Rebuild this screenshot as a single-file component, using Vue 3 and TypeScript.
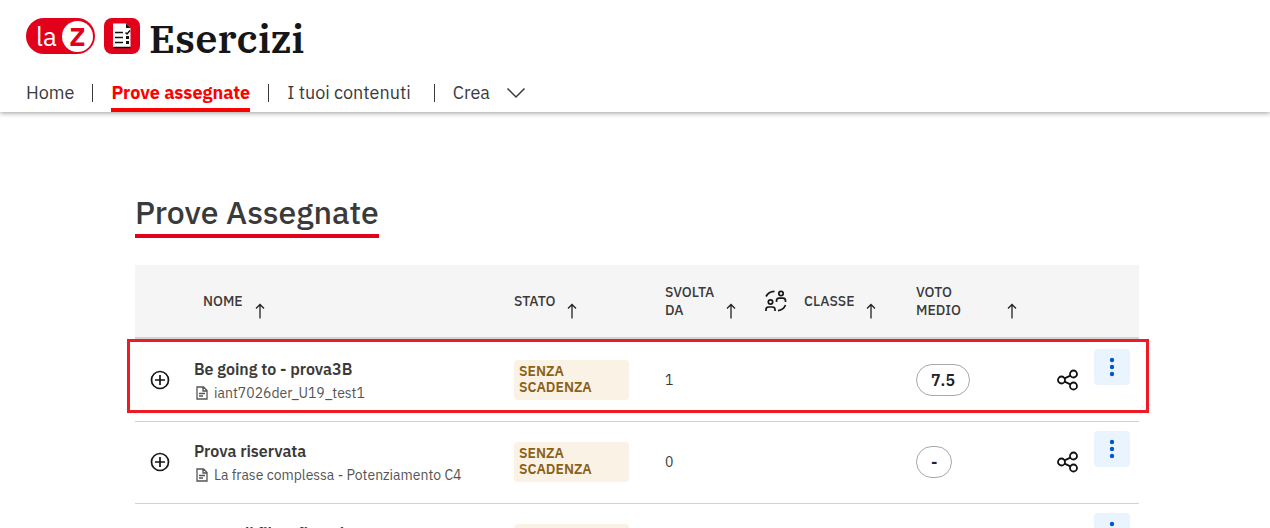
<script setup lang="ts">
interface Prova {
  titolo: string
  contenuto: string
  stato: string
  svolta: number
  voto: string
}

const prove: Prova[] = [
  { titolo: 'Be going to - prova3B', contenuto: 'iant7026der_U19_test1', stato: 'SENZA SCADENZA', svolta: 1, voto: '7.5' },
  { titolo: 'Prova riservata', contenuto: 'La frase complessa - Potenziamento C4', stato: 'SENZA SCADENZA', svolta: 0, voto: '-' },
  { titolo: 'prova di filosofia - al', contenuto: '', stato: 'SENZA SCADENZA', svolta: 0, voto: '-' },
]
</script>

<template>
  <div class="page">
    <header class="topbar">
      <a class="brand" href="#" aria-label="laZ Esercizi">
        <span class="laz"><span class="la">la</span><span class="zeta">Z</span></span>
        <svg class="app-icon" viewBox="0 0 36 36" aria-hidden="true">
          <rect width="36" height="36" rx="8" fill="#e2001a" />
          <path d="M9 5.500H22L26.500 10V29H9Z" fill="#fff" />
          <path d="M22 5.500L26.500 10H22Z" fill="#111" />
          <path d="M9.500 29.500H26.500" stroke="#111" stroke-width="1.500" />
          <path d="M11 14.500H19M11 19.500H19M11 24.500H19" stroke="#111" stroke-width="1.500" />
          <path d="M21.500 14.500L23 16L26 12.500" stroke="#111" stroke-width="1.500" fill="none" />
          <path d="M22 18H25V21H22ZM22 23H25V26H22Z" fill="#111" />
        </svg>
        <span class="brand-name">Esercizi</span>
      </a>
      <nav class="nav">
        <a href="#">Home</a>
        <span class="sep"></span>
        <a href="#" class="active">Prove assegnate</a>
        <span class="sep"></span>
        <a href="#">I tuoi contenuti</a>
        <span class="sep wide"></span>
        <button type="button" class="crea">
          Crea
          <svg width="20" height="12" viewBox="0 0 20 12" aria-hidden="true">
            <path d="M1.500 1.500L10 10L18.500 1.500" fill="none" stroke="#3a3a3a" stroke-width="1.500" />
          </svg>
        </button>
      </nav>
    </header>

    <main class="content">
      <h1>Prove Assegnate</h1>
      <div class="table-wrap">
        <table>
          <colgroup>
            <col class="c-expand" /><col /><col class="c-stato" /><col class="c-svolta" />
            <col class="c-classe" /><col class="c-voto" /><col class="c-share" /><col class="c-menu" />
          </colgroup>
          <thead>
            <tr>
              <th></th>
              <th>
                <div class="head nome"><span>NOME</span>
                  <svg class="arrow" viewBox="0 0 10 16"><path d="M5 15.500V1.500M1 5.500L5 1.500L9 5.500" /></svg>
                </div>
              </th>
              <th>
                <div class="head"><span>STATO</span>
                  <svg class="arrow" viewBox="0 0 10 16"><path d="M5 15.500V1.500M1 5.500L5 1.500L9 5.500" /></svg>
                </div>
              </th>
              <th>
                <div class="head"><span>SVOLTA<br />DA</span>
                  <svg class="arrow" viewBox="0 0 10 16"><path d="M5 15.500V1.500M1 5.500L5 1.500L9 5.500" /></svg>
                </div>
              </th>
              <th>
                <div class="head">
                  <svg class="people" viewBox="0 0 22 22" aria-hidden="true">
                    <g fill="none" stroke="#161616" stroke-width="1.700">
                      <circle cx="5.500" cy="12" r="2.200" />
                      <circle cx="16" cy="3.500" r="2.200" />
                      <path d="M1 21V19.500Q1 17 3.500 17H7.500Q10 17 10 19.500V21" />
                      <path d="M11.500 12V10.700Q11.500 8.200 14 8.200H18Q20.500 8.200 20.500 10.700V12" />
                      <path d="M1 6.500Q3.500 1.500 9.500 1.300" />
                      <path d="M20.500 15Q18.500 20 13 20.700" />
                    </g>
                  </svg>
                  <span>CLASSE</span>
                  <svg class="arrow" viewBox="0 0 10 16"><path d="M5 15.500V1.500M1 5.500L5 1.500L9 5.500" /></svg>
                </div>
              </th>
              <th>
                <div class="head voto-h"><span>VOTO<br />MEDIO</span>
                  <svg class="arrow" viewBox="0 0 10 16"><path d="M5 15.500V1.500M1 5.500L5 1.500L9 5.500" /></svg>
                </div>
              </th>
              <th></th>
              <th></th>
            </tr>
          </thead>
          <tbody>
            <tr v-for="p in prove" :key="p.titolo">
              <td class="icon-cell">
                <button type="button" class="expand" aria-label="Espandi">
                  <svg width="20" height="20" viewBox="0 0 20 20">
                    <circle cx="10" cy="10" r="8.500" fill="none" stroke="#161616" stroke-width="1.700" />
                    <path d="M10 5V15M5 10H15" stroke="#161616" stroke-width="1.700" />
                  </svg>
                </button>
              </td>
              <td>
                <div class="titolo">{{ p.titolo }}</div>
                <div class="contenuto">
                  <svg width="12" height="14" viewBox="0 0 12 14" aria-hidden="true">
                    <path d="M1 1H7.500L11 4.500V13H1ZM7 1V5H11M3 7.500H9M3 10H7" fill="none" stroke="#555" stroke-width="1.300" />
                  </svg>
                  <span>{{ p.contenuto }}</span>
                </div>
              </td>
              <td class="data-cell"><div class="badge">{{ p.stato }}</div></td>
              <td class="data-cell num">{{ p.svolta }}</td>
              <td></td>
              <td class="data-cell"><span class="voto">{{ p.voto }}</span></td>
              <td class="icon-cell">
                <button type="button" aria-label="Condividi">
                  <svg width="22" height="22" viewBox="0 0 22 22">
                    <g fill="none" stroke="#111" stroke-width="1.800">
                      <circle cx="4.500" cy="11" r="3.500" />
                      <circle cx="16.500" cy="5" r="3.500" />
                      <circle cx="16.500" cy="17" r="3.500" />
                      <path d="M7.600 9.400L13.400 6.600M7.600 12.600L13.400 15.400" />
                    </g>
                  </svg>
                </button>
              </td>
              <td class="menu-cell">
                <button type="button" class="menu" aria-label="Altre azioni">
                  <svg width="6" height="20" viewBox="0 0 6 20">
                    <g fill="#0058c8"><circle cx="3" cy="3" r="2.200" /><circle cx="3" cy="10" r="2.200" /><circle cx="3" cy="17" r="2.200" /></g>
                  </svg>
                </button>
              </td>
            </tr>
          </tbody>
        </table>
        <div class="highlight"></div>
      </div>
    </main>
  </div>
</template>

<style>
body { margin: 0; background: #fff; }
</style>

<style scoped>
* { box-sizing: border-box; }
.page {
  height: 100vh;
  overflow: hidden;
  font-family: "IBM Plex Sans", "Noto Sans", sans-serif;
  color: #3a3a3a;
}
a { color: inherit; text-decoration: none; }
button { font: inherit; color: inherit; border: 0; background: none; padding: 0; cursor: pointer; }
svg { display: block; flex: none; }
.topbar {
  height: 112px;
  padding: 18px 26px 0;
  display: flex;
  flex-direction: column;
  justify-content: space-between;
  background: #fff;
  box-shadow: 0 1px 5px rgba(0, 0, 0, 0.4);
}
.brand { display: flex; align-items: center; height: 36px; }
.laz {
  display: flex;
  align-items: center;
  justify-content: space-between;
  width: 69px;
  height: 36px;
  padding: 0 2px 0 10px;
  border-radius: 18px;
  background: #e2001a;
  color: #fff;
}
.la { font-size: 26px; line-height: 36px; font-weight: 400; }
.zeta {
  width: 31px;
  height: 31px;
  border-radius: 50%;
  background: #fff;
  color: #e2001a;
  font-size: 26px;
  line-height: 31px;
  font-weight: 700;
  text-align: center;
}
.app-icon { width: 36px; height: 36px; margin: 0 9px; }
.brand-name {
  padding-top: 4px;
  font-family: "IBM Plex Serif", "DejaVu Serif", serif;
  font-size: 40px;
  line-height: 40px;
  font-weight: 600;
  color: #161616;
}
.nav { display: flex; align-items: stretch; height: 38px; font-size: 18px; line-height: 38px; font-weight: 400; }
.nav a.active { font-weight: 700; color: #f00; border-bottom: 4px solid #f00; }
.sep { width: 1px; height: 18px; margin: 10px 18px; background: #3a3a3a; }
.sep.wide { margin-left: 23px; }
.crea { display: flex; align-items: center; gap: 16px; }
.content { padding: 80px 131px 0 135px; }
h1 {
  width: fit-content;
  margin: 0 0 27px;
  padding-bottom: 2px;
  border-bottom: 4px solid #e2001a;
  font-size: 32px;
  line-height: 40px;
  font-weight: 500;
}
.table-wrap { position: relative; }
table { width: 100%; table-layout: fixed; border-collapse: separate; border-spacing: 0; }
.c-expand { width: 59px; }
.c-stato { width: 151px; }
.c-svolta { width: 100px; }
.c-classe { width: 151px; }
.c-voto { width: 141px; }
.c-share { width: 37px; }
.c-menu { width: 45px; }
th, td { padding: 0; text-align: left; }
th {
  height: 75px;
  background: #f5f5f5;
  border-bottom: 3px solid #d3d3d3;
  font-size: 14px;
  line-height: 18px;
  font-weight: 500;
}
.head { display: flex; align-items: center; gap: 12px; }
.nome { padding-left: 9px; }
.people { width: 22px; height: 22px; margin-right: 5px; }
.voto-h { gap: 46px; }
.arrow { width: 10px; height: 36px; padding-top: 20px; fill: none; stroke: #222; stroke-width: 1.3; }
td { height: 82px; border-bottom: 1px solid #d3d3d3; }
.icon-cell { padding-top: 2px; }
.data-cell { padding-bottom: 2px; }
.expand { margin-left: 15px; }
.titolo { font-size: 16px; line-height: 24px; font-weight: 600; }
.contenuto {
  display: flex;
  align-items: center;
  gap: 6px;
  height: 24px;
  padding-left: 2px;
  font-size: 14px;
  line-height: 24px;
  color: #555;
}
.badge {
  width: 115px;
  padding: 3px 5px 5px;
  border-radius: 4px;
  background: #fbf2e6;
  color: #8a6116;
  font-size: 14px;
  line-height: 16px;
  font-weight: 600;
}
.num { font-size: 14px; line-height: 18px; }
.voto {
  display: inline-block;
  height: 32px;
  padding: 0 14px;
  border: 1px solid #a8a8a8;
  border-radius: 16px;
  font-size: 16px;
  line-height: 30px;
  font-weight: 600;
  color: #222;
}
.menu-cell { vertical-align: top; padding-top: 9px; }
.menu {
  display: flex;
  align-items: center;
  justify-content: center;
  width: 36px;
  height: 36px;
  border-radius: 4px;
  background: #e9f4ff;
}
.highlight {
  position: absolute;
  top: 74px;
  left: -8px;
  right: -10px;
  height: 74px;
  border: 3px solid #ed1c24;
  pointer-events: none;
}
</style>
